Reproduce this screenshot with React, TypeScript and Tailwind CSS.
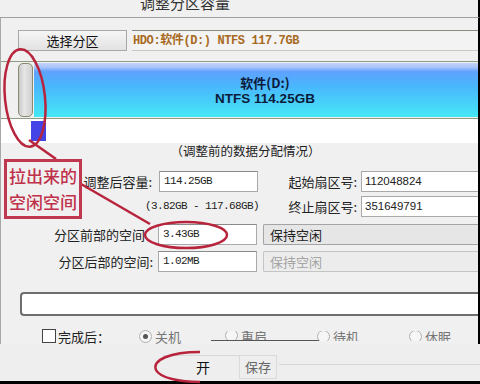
const cjk = "font-['SimSun','Noto_Sans_CJK_SC',sans-serif]";

const Field = ({ value }: { value: string }) => (
  <div className="h-[21px] w-[99px] bg-white border border-[#a9a9a9] border-t-[#8a8a8a] flex items-center pl-[4px]">
    <span className="font-['Liberation_Mono',monospace] text-[11px] tracking-[-0.6px] text-[#222]">{value}</span>
  </div>
);

const Label = ({ text, w }: { text: string; w: string }) => (
  <div className={`${w} text-right text-[13px] text-[#222] leading-none whitespace-nowrap`}>{text}</div>
);

const Radio = ({ label, checked = false }: { label: string; checked?: boolean }) => (
  <div className="flex items-center gap-[3px]">
    <div className="w-[13px] h-[13px] rounded-full border border-[#b0b0b0] bg-[#f6f6f6] flex items-center justify-center">
      {checked && <div className="w-[5px] h-[5px] rounded-full bg-[#555]" />}
    </div>
    <span className="text-[13px] text-[#777] leading-none">{label}</span>
  </div>
);

export default function App() {
  return (
    <div className={`relative w-[480px] h-[384px] overflow-hidden bg-[#f0f0f0] ${cjk}`}>
      {/* title */}
      <div className="h-[18px] border-b border-[#a0a0a0] border-r-2 border-r-black flex overflow-hidden">
        <span className="ml-[140px] -mt-[5px] text-[15px] text-[#333] leading-none">调整分区容量</span>
      </div>

      <div className="h-[326px] border-l border-[#a8a8a8] border-r-2 border-r-black flex flex-col *:shrink-0">
        {/* partition picker */}
        <div className="flex mt-[12px] pl-[17px] gap-[5px]">
          <div className="w-[109px] h-[21px] border border-[#a8a8a8] bg-[linear-gradient(to_bottom,#f6f6f6,#e2e2e2)] flex items-center justify-center text-[13px] text-[#111]">
            选择分区
          </div>
          <div className="flex-1 h-[21px] border-t border-b border-t-[#8a8a80] border-b-[#c8c8c0] bg-[#f3f3f3] flex items-center pl-[1px]">
            <span className="font-['Liberation_Mono','Noto_Sans_CJK_SC',monospace] font-bold text-[12px] tracking-[-0.4px] text-[#a86a22]">
              HDO:软件(D:) NTFS 117.7GB
            </span>
          </div>
        </div>

        {/* partition bar */}
        <div className="flex mt-[10px] pl-[17px] h-[58px] border-t border-b border-[#8e9c86] py-[1px]">
          <div className="w-[15px] rounded-[5px] border border-[#8a8a70] bg-[linear-gradient(to_right,#c8c8c8,#e6e6e6_40%,#cfcfcf)]" />
          <div className="flex-1 ml-[1px] bg-[linear-gradient(to_bottom,#c2d4f8_0%,#a8c4fa_8%,#5fa2ff_16%,#4ab4fc_40%,#44e8f6_100%)] flex flex-col items-center justify-center pl-[18px] font-bold text-[13px] text-[#0c1a3c]">
            <span className="leading-[16px]">软件(D:)</span>
            <span className="leading-[15px] font-['Liberation_Sans',sans-serif] text-[13.5px]">NTFS 114.25GB</span>
          </div>
        </div>

        {/* free block */}
        <div className="h-[24px] bg-white pl-[30px]">
          <div className="w-[15px] h-[20px] mt-[2px] bg-[#4444e6]" />
        </div>

        <div className="h-[16px] mt-[2px] flex justify-center text-[12.5px] text-[#222] leading-none pl-[12px]">
          （调整前的数据分配情况）
        </div>

        {/* form */}
        <div className="flex flex-col mt-[10px]">
          <div className="flex items-center h-[21px]">
            <Label text="调整后容量:" w="w-[151px]" />
            <div className="ml-[7px]"><Field value="114.25GB" /></div>
            <Label text="起始扇区号:" w="w-[99px]" />
            <div className="ml-[4px] flex-1 h-[21px] bg-white border border-[#a9a9a9] border-r-0 flex items-center pl-[3px] font-['Liberation_Sans',sans-serif] text-[11.5px] text-[#222]">
              112048824
            </div>
          </div>
          <div className="flex items-center h-[21px] mt-[4px]">
            <div className="w-[257px] pl-[144px] whitespace-nowrap font-['Liberation_Mono',monospace] text-[11px] tracking-[-0.6px] text-[#222]">
              (3.82GB - 117.68GB)
            </div>
            <Label text="终止扇区号:" w="w-[99px]" />
            <div className="ml-[4px] flex-1 h-[21px] bg-white border border-[#a9a9a9] border-r-0 flex items-center pl-[3px] font-['Liberation_Sans',sans-serif] text-[11.5px] text-[#222]">
              351649791
            </div>
          </div>
          <div className="flex items-center h-[21px] mt-[7px]">
            <Label text="分区前部的空间" w="w-[144px]" />
            <div className="ml-[13px]"><Field value="3.43GB" /></div>
            <div className="ml-[6px] flex-1 h-[21px] bg-[#e6e6e6] border border-[#a4a4a4] border-r-0 rounded-l-[2px] flex items-center pl-[6px] text-[13px] text-[#222]">
              保持空闲
            </div>
          </div>
          <div className="flex items-center h-[21px] mt-[6px]">
            <Label text="分区后部的空间:" w="w-[152px]" />
            <div className="ml-[5px]"><Field value="1.02MB" /></div>
            <div className="ml-[6px] flex-1 h-[21px] bg-[#ececec] border border-[#c4c4c4] border-r-0 rounded-l-[2px] flex items-center pl-[6px] text-[13px] text-[#a4a4a4]">
              保持空闲
            </div>
          </div>
        </div>

        {/* progress */}
        <div className="ml-[19px] mt-[20px] h-[24px] bg-white border-2 border-[#6e6e6e] border-r-0 rounded-l-[4px]" />

        {/* after completion */}
        <div className="flex items-start mt-[13px] h-[15px]">
          <div className="ml-[41px] w-[14px] h-[14px] border border-[#444] bg-white" />
          <span className="ml-[2px] text-[13px] text-[#222] leading-[15px]">完成后：</span>
          <div className="ml-[29px] mt-[1px]"><Radio label="关机" checked /></div>
          <div className="ml-[30px] w-[112px] h-[10px] mt-[2px] border-b border-[#555] overflow-hidden flex pl-[14px]">
            <Radio label="重启" />
          </div>
          <div className="ml-[-6px] h-[10px] mt-[2px] overflow-hidden flex gap-[50px]">
            <Radio label="待机" />
            <Radio label="休眠" />
          </div>
        </div>
      </div>

      {/* bottom buttons */}
      <div className="h-[37px] flex items-end pb-[2px] bg-[#eeeeee]">
        <div className="ml-[163px] w-[76px] h-[24px] border-t border-[#d8d8d8] flex items-center justify-center text-[14px] text-[#111] pl-[4px]">
          开
        </div>
        <div className="w-[38px] h-[24px] border border-[#dadada] flex items-center justify-center text-[13px] text-[#666]">
          保存
        </div>
        <div className="flex-1 ml-[2px] h-[1px] bg-[#d6d6d6] mb-[14px]" />
      </div>
      <div className="h-[3px] bg-black" />

      {/* annotations */}
      <svg className="absolute inset-0 pointer-events-none" width="480" height="384" viewBox="0 0 480 384">
        <g fill="none" stroke="#b8243c" strokeWidth="2.5">
          <ellipse cx="25" cy="98" rx="20" ry="49" transform="rotate(-6 25 98)" />
          <line x1="29" y1="140" x2="56" y2="159" />
          <line x1="81" y1="184" x2="150" y2="224" />
          <ellipse cx="186" cy="235" rx="41" ry="13" />
          <path d="M200 352 C170 352 152 360 156 370 C160 378 180 382 200 382" />
        </g>
      </svg>
      <div className="absolute left-[4px] top-[159px] w-[78px] h-[60px] border-[3px] border-[#c0384f] bg-[#f0f0f0] flex flex-col items-center justify-center font-['Noto_Sans_CJK_SC',sans-serif] text-[17px] leading-[26px] text-[#c0304a] font-medium">
        <span>拉出来的</span>
        <span>空闲空间</span>
      </div>
    </div>
  );
}
